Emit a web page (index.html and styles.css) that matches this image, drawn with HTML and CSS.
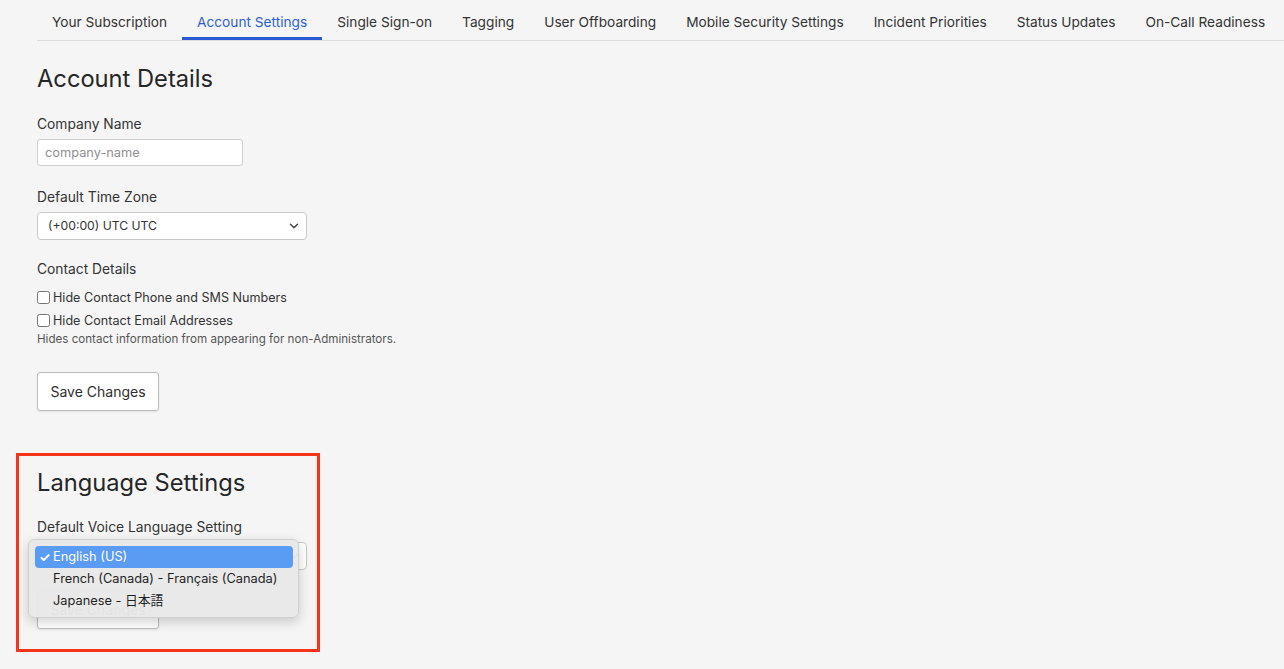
FILE: index.html
```html
<!DOCTYPE html>
<html lang="en">
<head>
<meta charset="utf-8">
<title>Account Settings</title>
<link rel="stylesheet" href="styles.css">
</head>
<body>
<nav class="tabs">
  <a class="tab">Your Subscription</a>
  <a class="tab active">Account Settings</a>
  <a class="tab">Single Sign-on</a>
  <a class="tab">Tagging</a>
  <a class="tab">User Offboarding</a>
  <a class="tab">Mobile Security Settings</a>
  <a class="tab">Incident Priorities</a>
  <a class="tab">Status Updates</a>
  <a class="tab">On-Call Readiness</a>
</nav>

<main class="content">
  <section class="account">
    <h2 class="heading">Account Details</h2>

    <label class="field-label first">Company Name</label>
    <input class="text-input" type="text" placeholder="company-name">

    <label class="field-label tz-label">Default Time Zone</label>
    <div class="select-wrap">
      <select class="select"><option>(+00:00) UTC UTC</option></select>
      <svg class="chevron" width="10" height="6" viewBox="0 0 10 6"><path d="M1.5 1.2l3.5 3.5 3.5-3.5" fill="none" stroke="#444" stroke-width="1.5" stroke-linecap="round" stroke-linejoin="round"/></svg>
    </div>

    <label class="field-label contact-label">Contact Details</label>
    <div class="checks">
      <label class="check"><input type="checkbox">Hide Contact Phone and SMS Numbers</label>
      <label class="check"><input type="checkbox">Hide Contact Email Addresses</label>
    </div>
    <p class="help">Hides contact information from appearing for non-Administrators.</p>

    <button class="btn">Save Changes</button>
  </section>

  <section class="lang">
    <h2 class="heading">Language Settings</h2>
    <label class="field-label">Default Voice Language Setting</label>
    <div class="select-wrap">
      <select class="select"><option>English (US)</option></select>
      <svg class="chevron" width="10" height="6" viewBox="0 0 10 6"><path d="M1.5 1.2l3.5 3.5 3.5-3.5" fill="none" stroke="#444" stroke-width="1.5" stroke-linecap="round" stroke-linejoin="round"/></svg>
    </div>
    <button class="btn">Save Changes</button>

    <ul class="popup">
      <li class="opt selected"><span class="tick">✓</span>English (US)</li>
      <li class="opt">French (Canada) - Français (Canada)</li>
      <li class="opt">Japanese - 日本語</li>
    </ul>
    <div class="annotation"></div>
  </section>
</main>
</body>
</html>
```

FILE: styles.css
```css
* { box-sizing: border-box; }

body {
  margin: 0;
  background: #f5f5f5;
  color: #2e2e2e;
  font-family: Inter, "Noto Sans", "Noto Sans CJK JP", sans-serif;
}

.tabs {
  display: flex;
  margin-left: 37px;
  border-bottom: 1px solid #dcdcdc;
}

.tab {
  padding: 14px 15px 6px;
  border-bottom: 3px solid transparent;
  font-size: 13.7px;
  line-height: 17px;
  color: #333;
  white-space: nowrap;
}

.tab.active {
  color: #2f5fd6;
  border-bottom-color: #2a5bd7;
}

.content {
  margin-left: 37px;
}

.account {
  display: flex;
  flex-direction: column;
  align-items: flex-start;
}

.heading {
  margin: 0;
  font-size: 23.7px;
  line-height: 29px;
  font-weight: 400;
  color: #262626;
}

.account .heading { margin-top: 22.5px; }

.field-label {
  display: block;
  font-size: 13.8px;
  line-height: 17px;
  color: #333;
  margin-top: 22px;
  margin-bottom: 6px;
}

.field-label.first { margin-top: 23.5px; margin-bottom: 5.5px; }
.field-label.tz-label { margin-top: 23px; margin-bottom: 6px; }
.field-label.contact-label { margin-top: 21px; margin-bottom: 0; }

.text-input {
  width: 206px;
  height: 27px;
  border: 1px solid #cfcfcf;
  border-radius: 3px;
  background: #fff;
  padding: 0 7px;
  font-family: inherit;
  font-size: 12.8px;
  color: #333;
}

.text-input::placeholder { color: #8f8f8f; }

.select-wrap {
  position: relative;
  width: 270px;
  height: 28px;
}

.select {
  appearance: none;
  -webkit-appearance: none;
  width: 100%;
  height: 100%;
  border: 1px solid #c9c9c9;
  border-radius: 4px;
  background: #fff;
  padding: 0 10px;
  font-family: inherit;
  font-size: 12.2px;
  color: #333;
}

.chevron {
  position: absolute;
  right: 8px;
  top: 11px;
}

.checks {
  display: flex;
  flex-direction: column;
  margin-top: 8px;
}

.check {
  display: flex;
  align-items: center;
  font-size: 12.6px;
  line-height: 23px;
  color: #333;
}

.check input {
  margin: 0 3px 0 0;
  width: 13px;
  height: 13px;
}

.help {
  margin: 0;
  font-size: 11.6px;
  line-height: 14px;
  color: #555;
}

.btn {
  margin-top: 26px;
  width: 122px;
  height: 39px;
  border: 1px solid #bdbdbd;
  border-radius: 3px;
  background: #fff;
  box-shadow: 0 1px 2px rgba(0,0,0,0.08);
  font-family: inherit;
  font-size: 14px;
  color: #2e2e2e;
}

.lang {
  position: relative;
  margin-top: 57px;
  display: flex;
  flex-direction: column;
  align-items: flex-start;
  padding-bottom: 40px;
}

.lang .field-label { margin-top: 22px; margin-bottom: 6px; }

.lang .btn { margin-top: 20px; }

.popup {
  position: absolute;
  left: -9px;
  top: 71.5px;
  width: 271px;
  margin: 0;
  padding: 6px 5px 5px 6px;
  list-style: none;
  background: rgba(232,232,232,0.97);
  border: 1px solid #cfcfcf;
  border-radius: 6px;
  box-shadow: 0 4px 12px rgba(0,0,0,0.18);
}

.opt {
  position: relative;
  height: 22px;
  line-height: 22px;
  padding-left: 18px;
  font-size: 12.8px;
  color: #1f1f1f;
  border-radius: 4px;
  font-family: Inter, "Noto Sans CJK JP", sans-serif;
}

.opt.selected {
  background: #5a9bf3;
  color: #fff;
}

.tick {
  position: absolute;
  left: 4px;
  top: 0;
  font-size: 13px;
  font-weight: 700;
}

.annotation {
  position: absolute;
  left: -21px;
  top: -14.5px;
  width: 304px;
  height: 199px;
  border: 3px solid #f5341a;
  pointer-events: none;
}
```
